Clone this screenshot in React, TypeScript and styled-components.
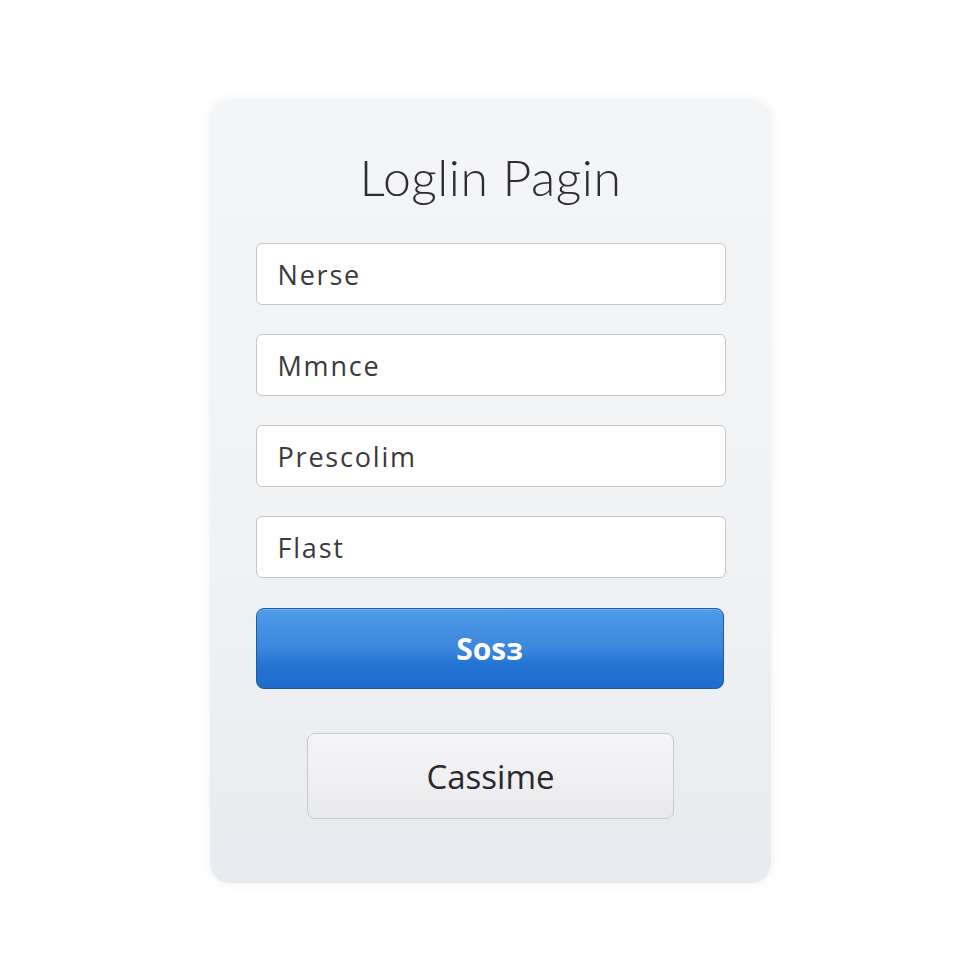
import React from "react";
import styled, { createGlobalStyle } from "styled-components";

const Global = createGlobalStyle`
  html, body { margin: 0; padding: 0; background: #ffffff; }
  body { font-family: "Open Sans", "Noto Sans", sans-serif; }
`;

const Page = styled.div`
  width: 980px;
  height: 980px;
  display: flex;
  align-items: flex-start;
  justify-content: center;
  padding-top: 100px;
  box-sizing: border-box;
`;

const Card = styled.div`
  width: 561px;
  height: 783px;
  box-sizing: border-box;
  padding: 48px 45px 0 46px;
  border-radius: 20px;
  background: linear-gradient(180deg, #f4f5f6 0%, #f1f2f4 55%, #e8eaef 100%);
  box-shadow: 0 0 10px rgba(200, 205, 215, 0.35);
  display: flex;
  flex-direction: column;
`;

const Title = styled.h1`
  margin: 0 0 37px;
  font-family: "Lato", "Open Sans", sans-serif;
  font-weight: 300;
  font-size: 50px;
  line-height: 58px;
  color: #2e2e30;
  text-align: center;
  letter-spacing: 0.5px;
`;

const Fields = styled.div`
  display: flex;
  flex-direction: column;
  gap: 29px;
`;

const Field = styled.div`
  height: 62px;
  box-sizing: border-box;
  border: 1px solid #c6c7cb;
  border-radius: 6px;
  background: #ffffff;
  display: flex;
  align-items: center;
  padding-left: 21px;
  font-family: "Open Sans", sans-serif;
  font-size: 27px;
  letter-spacing: 1.8px;
  color: #3a3a3c;
`;

const Primary = styled.button`
  margin-top: 30px;
  height: 81px;
  width: 468px;
  border-radius: 8px;
  border: 1px solid #1b5aad;
  background: linear-gradient(180deg, #4d9be8 0%, #3b87dc 50%, #2474d3 70%, #1f6ccc 100%);
  color: #ffffff;
  font-family: "Open Sans", sans-serif;
  font-weight: 700;
  font-size: 30px;
  cursor: pointer;
  box-shadow: inset 0 1px 0 rgba(255, 255, 255, 0.25);
`;

const Secondary = styled.button`
  margin: 44px auto 0;
  width: 367px;
  height: 86px;
  border-radius: 8px;
  border: 1px solid #c9cacf;
  background: linear-gradient(180deg, #f5f5f7 0%, #efeff2 60%, #e8e9ec 100%);
  color: #2a2a2c;
  font-family: "Open Sans", sans-serif;
  font-size: 33px;
  cursor: pointer;
`;

export default function App() {
  return (
    <>
      <Global />
      <Page>
        <Card>
          <Title>Loglin Pagin</Title>
          <Fields>
            <Field>Nerse</Field>
            <Field>Mmnce</Field>
            <Field>Prescolim</Field>
            <Field>Flast</Field>
          </Fields>
          <Primary>Sosз</Primary>
          <Secondary>Cassime</Secondary>
        </Card>
      </Page>
    </>
  );
}
